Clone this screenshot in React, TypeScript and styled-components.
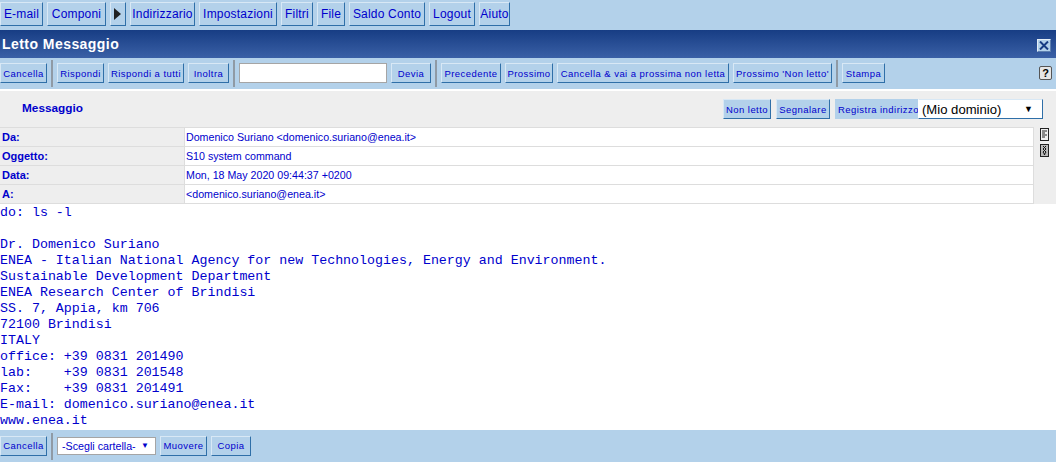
import React from "react";
import styled, { createGlobalStyle, css } from "styled-components";

const GlobalStyle = createGlobalStyle`
  html, body {
    margin: 0;
    padding: 0;
    background: #fff;
    overflow: hidden;
  }
`;

const Page = styled.div`
  width: 1056px;
  height: 462px;
  display: flex;
  flex-direction: column;
  font-family: "Liberation Sans", Arial, sans-serif;
  color: #0000cc;
  background: #fff;
`;

const NavBar = styled.div`
  height: 30px;
  box-sizing: border-box;
  padding: 2px 0 0;
  display: flex;
  gap: 4px;
  background: #b3d1ea;
`;

const raised = css`
  box-sizing: border-box;
  background: #b3d1ea;
  border: 1px solid;
  border-color: #d8e8f5 #2f6fa8 #2f6fa8 #d8e8f5;
  color: #0000cc;
  display: flex;
  align-items: center;
  justify-content: center;
  white-space: nowrap;
  font-family: "Liberation Sans", Arial, sans-serif;
`;

const NavButton = styled.div<{ $w: number }>`
  ${raised}
  width: ${(p) => p.$w}px;
  height: 24px;
  font-size: 12px;
  letter-spacing: 0.2px;
`;

const TitleBar = styled.div`
  height: 28px;
  box-sizing: border-box;
  padding: 0 5px 0 2px;
  display: flex;
  align-items: center;
  justify-content: space-between;
  background: linear-gradient(#173d84, #3a60a6);
`;

const Title = styled.div`
  color: #fff;
  font-size: 14px;
  font-weight: bold;
  letter-spacing: 0.45px;
`;

const CloseBox = styled.div`
  width: 14px;
  height: 13px;
  margin-top: 2px;
  box-sizing: border-box;
  border: 1px solid;
  border-color: #e4eef7 #5d7fb0 #5d7fb0 #e4eef7;
  background: #b3d1ea;
  display: flex;
  align-items: center;
  justify-content: center;
`;

const ToolBar = styled.div`
  height: 31px;
  box-sizing: border-box;
  padding-bottom: 1px;
  display: flex;
  align-items: center;
  background: #b3d1ea;
`;

const Group = styled.div`
  display: flex;
  align-items: center;
  gap: 4px;
`;

const Sep = styled.div`
  width: 2px;
  height: 27px;
  margin: 1px 4px 0;
  background: #8f9aa5;
`;

const Btn = styled.div<{ $w: number }>`
  ${raised}
  width: ${(p) => p.$w}px;
  height: 20px;
  font-size: 9.5px;
  letter-spacing: 0.45px;
`;

const ForwardInput = styled.div`
  width: 148px;
  height: 20px;
  box-sizing: border-box;
  background: #fff;
  border: 1px solid #a5a5a5;
`;

const Help = styled.div`
  margin-left: auto;
  margin-right: 4px;
  width: 13px;
  height: 14px;
  box-sizing: border-box;
  border: 1px solid #555;
  border-radius: 2px;
  background: #e6e6e6;
  color: #000;
  font-size: 11px;
  font-weight: bold;
  line-height: 12px;
  text-align: center;
`;

const WhiteGap = styled.div`
  height: 2px;
  background: #fff;
`;

const MessagePanel = styled.div`
  background: #eeeeee;
`;

const PanelHead = styled.div`
  height: 36px;
  box-sizing: border-box;
  display: flex;
  align-items: center;
  padding: 0 13px 0 22px;
  gap: 5px;
`;

const PanelTitle = styled.div`
  font-size: 11.8px;
  font-weight: bold;
  margin-right: auto;
  margin-top: -3px;
`;

const SaveAddress = styled.div`
  display: flex;
  align-items: stretch;
  height: 20px;
  background: #b3d1ea;
`;

const SaveLabel = styled.div`
  width: 83px;
  display: flex;
  align-items: center;
  padding-left: 3px;
  box-sizing: border-box;
  font-size: 9.5px;
  letter-spacing: 0.45px;
  white-space: nowrap;
`;

const DomainSelect = styled.div`
  width: 125px;
  box-sizing: border-box;
  background: #fff;
  border: 1px solid;
  border-color: #d8e8f5 #2f6fa8 #2f6fa8 #fff;
  color: #000;
  display: flex;
  align-items: center;
  justify-content: space-between;
  padding: 0 9px 0 3px;
  font-size: 13.1px;
`;

const Arrow = styled.span<{ $size: number }>`
  font-size: ${(p) => p.$size}px;
  color: inherit;
`;

const HeaderArea = styled.div`
  display: flex;
`;

const HeaderTable = styled.div`
  width: 1034px;
  display: grid;
  grid-template-columns: 185px 1fr;
  grid-auto-rows: 19px;
  border-top: 1px solid #dddddd;
`;

const Label = styled.div`
  box-sizing: border-box;
  border-bottom: 1px solid #dddddd;
  border-right: 1px solid #dddddd;
  padding-left: 2px;
  display: flex;
  align-items: center;
  font-size: 11px;
  font-weight: bold;
`;

const Value = styled.div`
  box-sizing: border-box;
  background: #fff;
  border-bottom: 1px solid #dddddd;
  border-right: 1px solid #dddddd;
  padding-left: 1px;
  display: flex;
  align-items: center;
  font-size: 10.67px;
`;

const SideIcons = styled.div`
  flex: 1;
  display: flex;
  flex-direction: column;
  align-items: flex-start;
  gap: 3px;
  padding: 1px 0 0 6px;
`;

const Body = styled.pre`
  flex: 1;
  margin: 0;
  padding-top: 1px;
  overflow: hidden;
  font-family: "Liberation Mono", "Courier New", monospace;
  font-size: 13.31px;
  line-height: 16px;
  color: #0000cc;
`;

const BottomBar = styled(ToolBar)`
  flex: none;
  height: 32px;
`;

const FolderSelect = styled.div`
  width: 99px;
  height: 18px;
  box-sizing: border-box;
  background: #fff;
  border: 1px solid #a5a5a5;
  display: flex;
  align-items: center;
  justify-content: space-between;
  padding: 0 6px 0 4px;
  font-size: 10.7px;
`;

const CloseIcon = () => (
  <svg width="10" height="9" viewBox="0 0 10 9">
    <path d="M1 0.5 L9 8.5 M9 0.5 L1 8.5" stroke="#173d84" strokeWidth="2" />
  </svg>
);

const ListIcon = () => (
  <svg width="9" height="13" viewBox="0 0 9 13">
    <rect x="0.5" y="0.5" width="8" height="12" fill="#eee" stroke="#222" />
    <path d="M2 3 H7 M2 5 H5 M2 7 H7 M2 9 H5" stroke="#222" />
  </svg>
);

const AttachIcon = () => (
  <svg width="9" height="13" viewBox="0 0 9 13">
    <rect x="0.5" y="0.5" width="8" height="12" fill="#bbb" stroke="#222" />
    <path d="M3 2 L6 5 L3 8 L5 11 M6 2 L3 5 L6 8 L4 11" stroke="#111" fill="none" />
  </svg>
);

const PlayIcon = () => (
  <svg width="8" height="12" viewBox="0 0 8 12">
    <path d="M0 0 L7 6 L0 12 Z" fill="#222" />
  </svg>
);

const navItems: [string, number][] = [
  ["E-mail", 43],
  ["Componi", 59],
];

const navItemsAfter: [string, number][] = [
  ["Indirizzario", 65],
  ["Impostazioni", 78],
  ["Filtri", 32],
  ["File", 28],
  ["Saldo Conto", 76],
  ["Logout", 46],
  ["Aiuto", 31],
];

const headers: [string, string][] = [
  ["Da:", "Domenico Suriano <domenico.suriano@enea.it>"],
  ["Oggetto:", "S10 system command"],
  ["Data:", "Mon, 18 May 2020 09:44:37 +0200"],
  ["A:", "<domenico.suriano@enea.it>"],
];

const bodyText = `do: ls -l

Dr. Domenico Suriano
ENEA - Italian National Agency for new Technologies, Energy and Environment.
Sustainable Development Department
ENEA Research Center of Brindisi
SS. 7, Appia, km 706
72100 Brindisi
ITALY
office: +39 0831 201490
lab:    +39 0831 201548
Fax:    +39 0831 201491
E-mail: domenico.suriano@enea.it
www.enea.it`;

export default function App() {
  return (
    <Page>
      <GlobalStyle />
      <NavBar>
        {navItems.map(([t, w]) => (
          <NavButton key={t} $w={w}>{t}</NavButton>
        ))}
        <NavButton $w={16}><PlayIcon /></NavButton>
        {navItemsAfter.map(([t, w]) => (
          <NavButton key={t} $w={w}>{t}</NavButton>
        ))}
      </NavBar>
      <TitleBar>
        <Title>Letto Messaggio</Title>
        <CloseBox><CloseIcon /></CloseBox>
      </TitleBar>
      <ToolBar>
        <Btn $w={47}>Cancella</Btn>
        <Sep />
        <Group>
          <Btn $w={47}>Rispondi</Btn>
          <Btn $w={76}>Rispondi a tutti</Btn>
          <Btn $w={41}>Inoltra</Btn>
        </Group>
        <Sep />
        <Group>
          <ForwardInput />
          <Btn $w={40}>Devia</Btn>
        </Group>
        <Sep />
        <Group>
          <Btn $w={60}>Precedente</Btn>
          <Btn $w={48}>Prossimo</Btn>
          <Btn $w={172}>Cancella &amp; vai a prossima non letta</Btn>
          <Btn $w={99}>Prossimo 'Non letto'</Btn>
        </Group>
        <Sep />
        <Btn $w={43}>Stampa</Btn>
        <Help>?</Help>
      </ToolBar>
      <WhiteGap />
      <MessagePanel>
        <PanelHead>
          <PanelTitle>Messaggio</PanelTitle>
          <Btn $w={48}>Non letto</Btn>
          <Btn $w={54}>Segnalare</Btn>
          <SaveAddress>
            <SaveLabel>Registra indirizzo</SaveLabel>
            <DomainSelect>(Mio dominio)<Arrow $size={9}>▼</Arrow></DomainSelect>
          </SaveAddress>
        </PanelHead>
        <HeaderArea>
          <HeaderTable>
            {headers.map(([k, v]) => (
              <React.Fragment key={k}>
                <Label>{k}</Label>
                <Value>{v}</Value>
              </React.Fragment>
            ))}
          </HeaderTable>
          <SideIcons>
            <ListIcon />
            <AttachIcon />
          </SideIcons>
        </HeaderArea>
      </MessagePanel>
      <Body>{bodyText}</Body>
      <BottomBar>
        <Btn $w={47}>Cancella</Btn>
        <Sep />
        <Group>
          <FolderSelect>-Scegli cartella-<Arrow $size={8}>▼</Arrow></FolderSelect>
          <Btn $w={47}>Muovere</Btn>
          <Btn $w={40}>Copia</Btn>
        </Group>
      </BottomBar>
    </Page>
  );
}
